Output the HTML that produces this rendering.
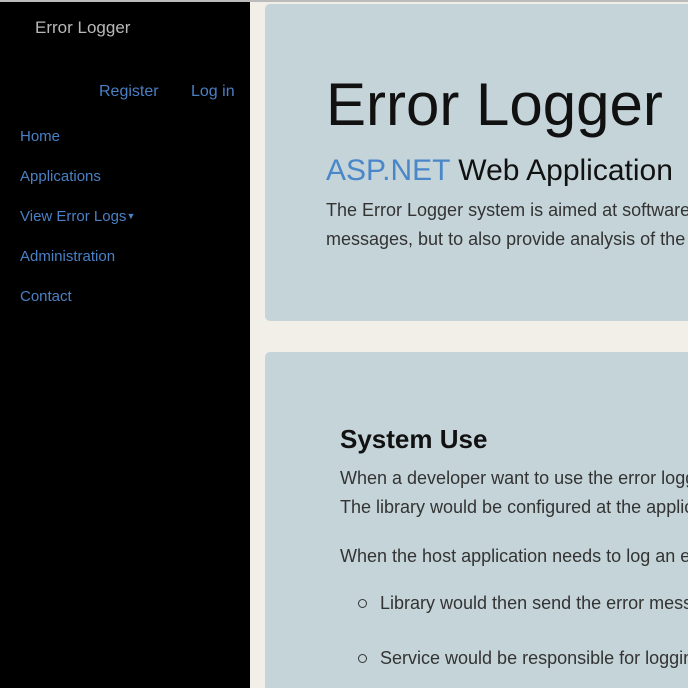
<!DOCTYPE html>
<html><head><meta charset="utf-8"><style>
*{margin:0;padding:0;box-sizing:border-box}
html,body{width:688px;height:688px;overflow:hidden}
body{background:#f2efe9;font-family:"Liberation Sans",sans-serif;position:relative}
.t{position:absolute;white-space:nowrap;line-height:1.25}
#side{position:absolute;left:0;top:2px;width:250px;height:686px;background:#000}
a{color:#4a80c4;text-decoration:none}
.card{position:absolute;background:#c4d4d9;border-radius:5px}
.p{color:#333;font-size:18px;font-weight:300}
</style></head><body>
<div style="position:absolute;left:0;top:0;width:688px;height:2px;background:#bbb"></div>
<div id="side"></div>
<div class="t" style="left:35px;top:17px;color:#b8b8b8;font-size:17px">Error Logger</div>
<div class="t" style="left:99px;top:82px;font-size:16px"><a>Register</a></div>
<div class="t" style="left:191px;top:82px;font-size:16px"><a>Log in</a></div>
<div class="t" style="left:20px;top:128px;font-size:15px"><a>Home</a></div>
<div class="t" style="left:20px;top:168px;font-size:15px"><a>Applications</a></div>
<div class="t" style="left:20px;top:208px;font-size:15px"><a>View Error Logs<span style="font-size:9px;position:relative;top:-2px">▼</span></a></div>
<div class="t" style="left:20px;top:248px;font-size:15px"><a>Administration</a></div>
<div class="t" style="left:20px;top:288px;font-size:15px"><a>Contact</a></div>

<div class="card" style="left:265px;top:4px;width:440px;height:317px"></div>
<div class="t" style="left:326px;top:72px;font-size:60px;color:#111;line-height:1.1">Error Logger</div>
<div class="t" style="left:326px;top:152px;font-size:30px;color:#111"><span style="color:#4a87c8">ASP.NET</span> Web Application</div>
<div class="t p" style="left:326px;top:199px;overflow:hidden;width:362px">The Error Logger system is aimed at software developers</div>
<div class="t p" style="left:326px;top:228px;overflow:hidden;width:362px">messages, but to also provide analysis of the data</div>

<div class="card" style="left:265px;top:352px;width:440px;height:340px"></div>
<div class="t" style="left:340px;top:423px;font-size:26px;color:#111;font-weight:bold">System Use</div>
<div class="t p" style="left:340px;top:467px;width:348px;overflow:hidden">When a developer want to use the error logger</div>
<div class="t p" style="left:340px;top:496px;width:348px;overflow:hidden">The library would be configured at the application</div>
<div class="t p" style="left:340px;top:545px;width:348px;overflow:hidden">When the host application needs to log an error</div>
<div style="position:absolute;left:358px;top:599px;width:9px;height:9px;border:1.5px solid #333;border-radius:50%"></div>
<div class="t p" style="left:380px;top:592px;width:308px;overflow:hidden">Library would then send the error message</div>
<div style="position:absolute;left:358px;top:654px;width:9px;height:9px;border:1.5px solid #333;border-radius:50%"></div>
<div class="t p" style="left:380px;top:647px;width:308px;overflow:hidden">Service would be responsible for logging</div>
</body></html>
